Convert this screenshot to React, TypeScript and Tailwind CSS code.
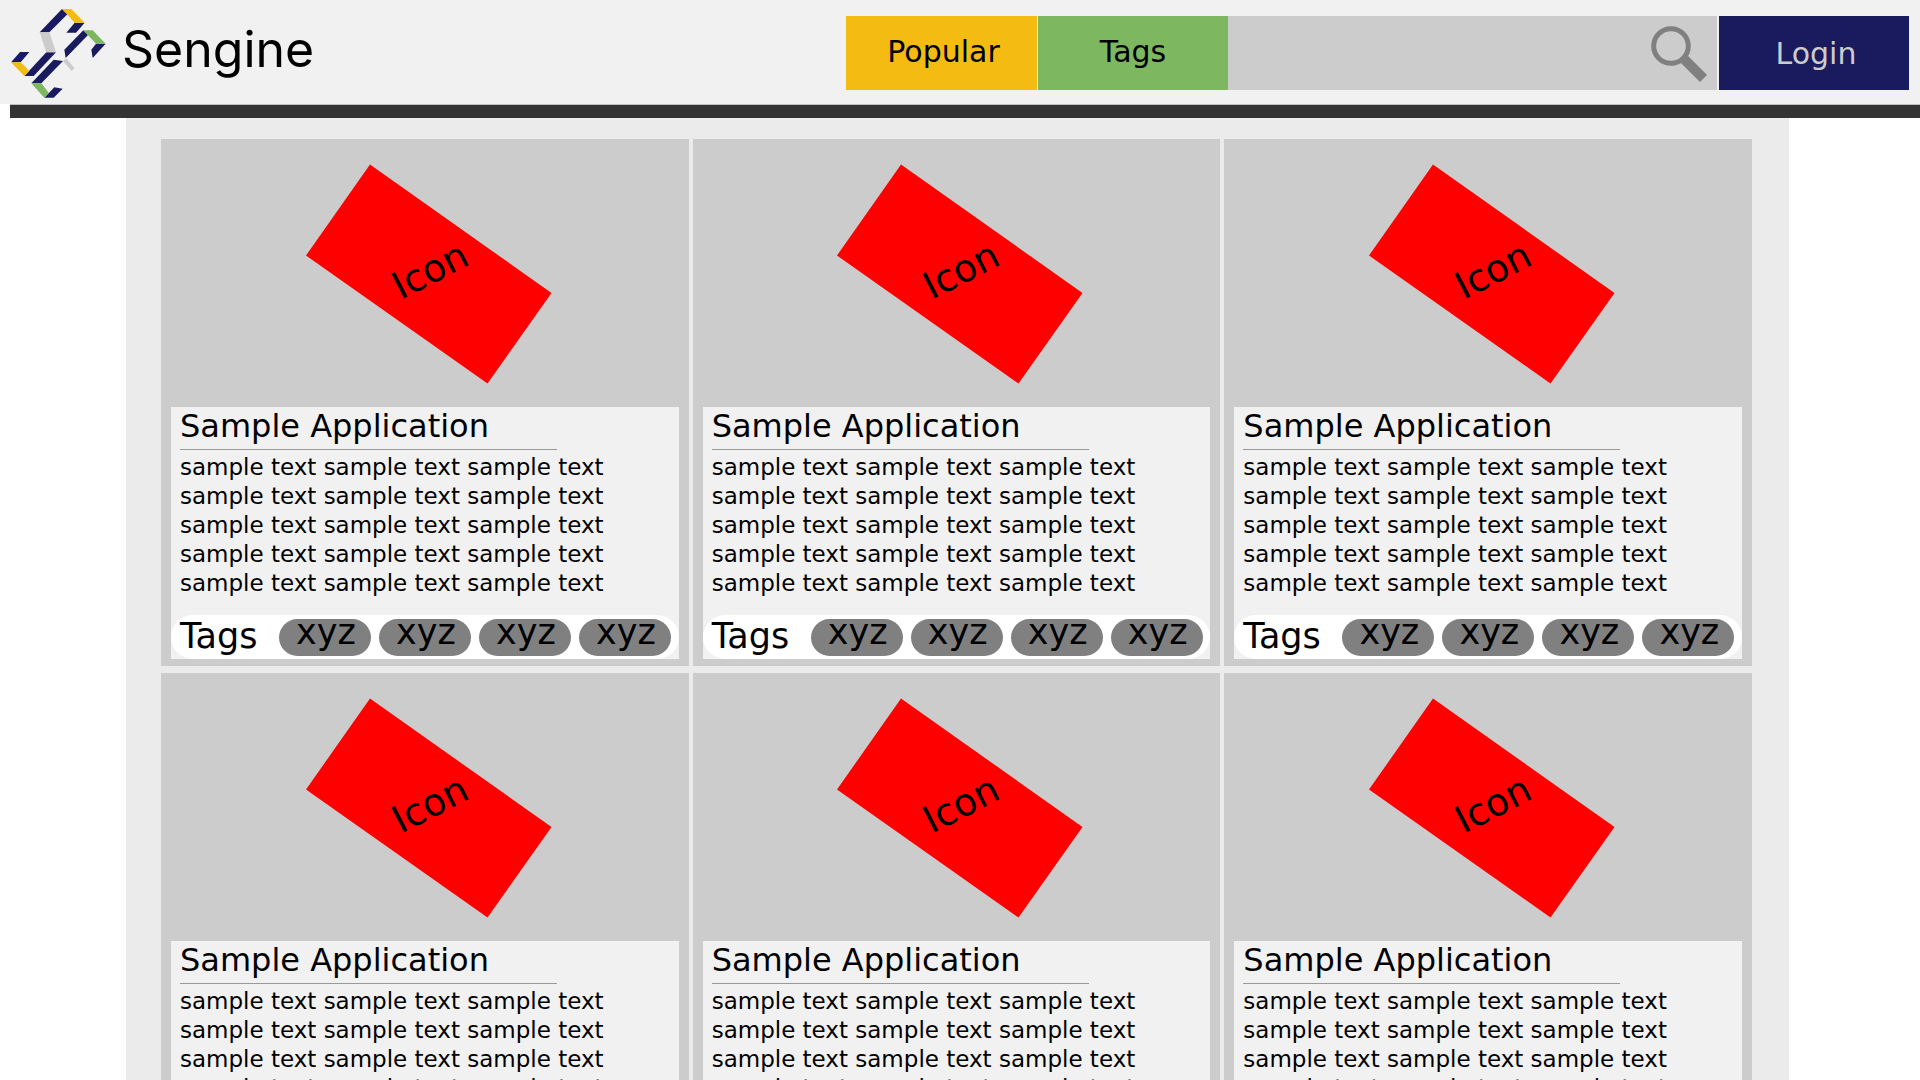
import React from "react";

const LINES = [1, 2, 3, 4, 5];
const TAGS = ["xyz", "xyz", "xyz", "xyz"];
const CARDS = [1, 2, 3, 4, 5, 6];

function Logo() {
  return (
    <svg viewBox="30 21 300 276" className="h-[92px] w-[100px] shrink-0" aria-hidden="true">
      <g fill="#1a1a5e">
        <polygon points="186,27 203,42 148,97 119,97" />
        <polygon points="224,68 254,68 228,98 199,98" />
        <polygon points="139,157 168,157 101,228 73,228" />
        <polygon points="60,156 88,156 62,187 33,187" />
        <polygon points="250,91 264,105 197,174 193,149" />
        <polygon points="288,131 317,131 278,174 274,149" />
        <polygon points="161,179 189,183 124,250 94,250" />
        <polygon points="133,293 161,293 188,266 163,262" />
      </g>
      <g fill="#f4bb12">
        <polygon points="186,27 214,27 254,68 224,68" />
        <polygon points="33,187 62,187 88,213 73,228" />
      </g>
      <g fill="#7db75f">
        <polygon points="250,91 278,91 317,131 288,131" />
        <polygon points="94,250 124,250 146,278 133,293" />
      </g>
      <g fill="#cccccc">
        <polygon points="119,97 148,97 168,157 139,157" />
        <polygon points="189,183 199,175 223,204 215,213" />
      </g>
    </svg>
  );
}

function SearchIcon() {
  return (
    <svg viewBox="0 0 60 60" className="h-[60px] w-[60px]" fill="none" stroke="#808080" aria-hidden="true">
      <circle cx="21" cy="21" r="17.3" strokeWidth="5" />
      <path d="M33 33 L53.5 53.5" strokeWidth="10" />
    </svg>
  );
}

function Header() {
  return (
    <header className="bg-[#f1f1f1]">
      <div className="flex h-[104px] items-start pr-[11px]">
        <a href="#" className="flex w-[846px] gap-3 pl-[10px] pt-[7px]">
          <Logo />
          <span className="pt-3 font-['Inter',sans-serif] text-[50px] leading-[60px]">Sengine</span>
        </a>
        <div className="mt-4 flex h-[74px] min-w-0 flex-1 text-[30px]">
          <nav className="flex gap-px">
            <button type="button" className="w-[191px] bg-[#f4bb12] pb-1 pl-1">Popular</button>
            <button type="button" className="w-[190px] bg-[#7db75f] pb-1">Tags</button>
          </nav>
          <form className="flex min-w-0 flex-1 items-center bg-[#cccccc] pr-[7px]" onSubmit={(e) => e.preventDefault()}>
            <input type="text" aria-label="Search" className="h-full min-w-0 flex-1 bg-transparent px-4 outline-none" />
            <button type="submit" aria-label="Search" className="pt-1">
              <SearchIcon />
            </button>
          </form>
          <button type="button" className="ml-0.5 w-[190px] bg-[#1a1a5e] pl-1 text-[#cccccc]">Login</button>
        </div>
      </div>
    </header>
  );
}

function AppIcon() {
  return (
    <svg viewBox="0 0 254 224" className="h-[224px] w-[254px]" role="img" aria-label="Icon">
      <polygon points="72,1.5 8,92.5 189.5,220.5 253.5,130" fill="#ff0000" />
      <text x="102.5" y="137" transform="rotate(-27 102.5 137)" fontSize="38" fill="#000000">
        Icon
      </text>
    </svg>
  );
}

function Card() {
  return (
    <article className="bg-[#cccccc] px-[10px] pb-[7px]">
      <div className="flex h-[268px] justify-center pt-6">
        <AppIcon />
      </div>
      <div className="bg-[#f1f1f1]">
        <div className="px-[9px]">
          <h2 className="w-[377px] max-w-full border-b border-[#999999] pb-1 text-[32px] leading-[38px]">
            Sample Application
          </h2>
          <div className="pt-[3px] text-[23px] leading-[29px]">
            {LINES.map((n) => (
              <p key={n}>sample text sample text sample text</p>
            ))}
          </div>
        </div>
        <div className="mt-[17px] flex h-[44px] items-center rounded-full bg-white pl-[9px] text-[35px]">
          <span className="w-[99px] shrink-0 pb-0.5 leading-[40px]">Tags</span>
          <ul className="flex gap-2">
            {TAGS.map((tag, i) => (
              <li key={i}>
                <a href="#" className="flex h-[37px] w-[92px] justify-center rounded-full bg-[#808080] pl-0.5 leading-[26px]">
                  {tag}
                </a>
              </li>
            ))}
          </ul>
        </div>
      </div>
    </article>
  );
}

export default function App() {
  return (
    <div className="h-screen overflow-hidden bg-white font-['DejaVu_Sans',sans-serif] text-black">
      <Header />
      <div className="ml-[10px] h-[14px] border-t border-[#bfbfbf] bg-[#333333]" />
      <main className="ml-[126px] mr-[131px] bg-[#ebebeb] pb-8 pl-[35px] pr-[37px] pt-[21px]">
        <div className="grid grid-cols-3 gap-x-1 gap-y-[7px]">
          {CARDS.map((n) => (
            <Card key={n} />
          ))}
        </div>
      </main>
    </div>
  );
}
